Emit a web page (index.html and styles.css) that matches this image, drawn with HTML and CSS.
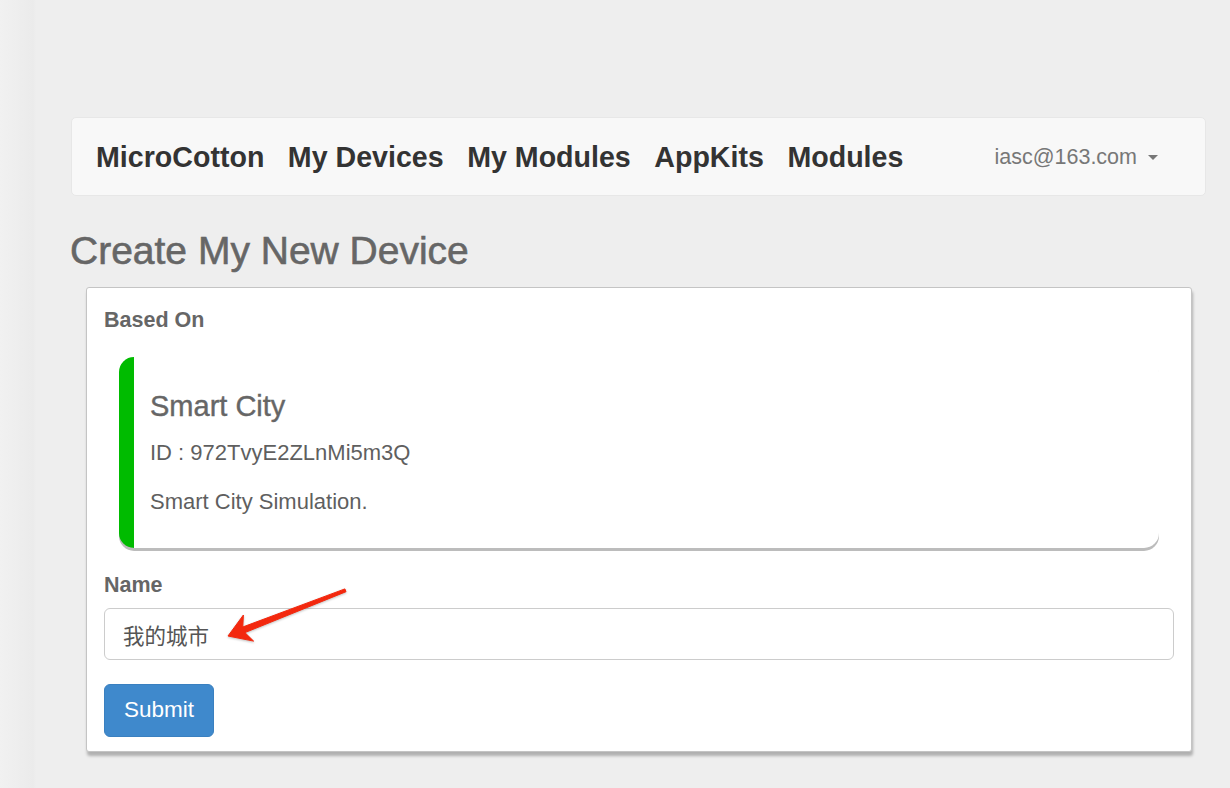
FILE: index.html
```html
<!DOCTYPE html>
<html lang="en">
<head>
<meta charset="utf-8">
<title>Create My New Device</title>
<link rel="stylesheet" href="styles.css">
</head>
<body>
<div class="page">
  <nav class="navbar">
    <ul class="nav-main">
      <li><a class="nav-link" href="#">MicroCotton</a></li>
      <li><a class="nav-link" href="#">My Devices</a></li>
      <li><a class="nav-link" href="#">My Modules</a></li>
      <li><a class="nav-link" href="#">AppKits</a></li>
      <li><a class="nav-link" href="#">Modules</a></li>
    </ul>
    <div class="user-menu">
      <span class="user-email">iasc@163.com</span>
      <span class="caret"></span>
    </div>
  </nav>

  <h1 class="page-title">Create My New Device</h1>

  <div class="panel">
    <form class="device-form">
      <label class="field-label">Based On</label>
      <div class="template-card">
        <h3 class="template-name">Smart City</h3>
        <p class="template-id">ID : 972TvyE2ZLnMi5m3Q</p>
        <p class="template-desc">Smart City Simulation.</p>
      </div>

      <label class="field-label name-label" for="name">Name</label>
      <div class="input-wrap">
        <input class="text-input" id="name" type="text" value="我的城市">
        <svg class="annot-arrow" width="130" height="64" viewBox="0 0 130 64">
          <polygon points="4,52 19.4,31 18.75,43 120.9,4.9 122,7.7 20.9,48.6 29.6,57.1" fill="#f3280e" stroke="#f3280e" stroke-width="1" stroke-linejoin="round"/>
        </svg>
      </div>

      <button class="btn-submit" type="button">Submit</button>
    </form>
  </div>
</div>
</body>
</html>
```
FILE: styles.css
```css
html, body {
  margin: 0;
  padding: 0;
}

body {
  background: linear-gradient(to right, #f1f1f1 0px, #ebebeb 33px, #eeeeee 36px);
  font-family: "Liberation Sans", Arial, "Noto Sans CJK SC", sans-serif;
  min-height: 788px;
}

.page {
  padding: 117px 24px 0 71px;
}

/* Navbar */
.navbar {
  box-sizing: border-box;
  height: 79px;
  background: #f8f8f8;
  border: 1px solid #e7e7e7;
  border-radius: 5px;
  display: flex;
  align-items: center;
  justify-content: space-between;
  padding: 0 47px 0 24px;
}

.nav-main {
  display: flex;
  gap: 23.5px;
  list-style: none;
  margin: 0;
  padding: 0;
}

.nav-link {
  font-size: 28.6px;
  font-weight: bold;
  color: #333;
  text-decoration: none;
  line-height: 34px;
}

.user-menu {
  display: flex;
  align-items: center;
  gap: 11px;
}

.user-email {
  font-size: 21.5px;
  color: #777;
  line-height: 30px;
}

.caret {
  width: 0;
  height: 0;
  border-left: 5px solid transparent;
  border-right: 5px solid transparent;
  border-top: 5px solid #777;
  margin-top: 2px;
}

/* Title */
.page-title {
  margin: 34px 0 15px -1px;
  font-size: 39px;
  line-height: 42px;
  font-weight: normal;
  color: #666;
  -webkit-text-stroke: 0.6px #666;
}

/* Panel */
.panel {
  margin: 0 14px 0 15px;
  background: #fff;
  border: 1px solid #c4c4c4;
  border-radius: 3px;
  box-shadow: 1px 4px 3px rgba(0, 0, 0, 0.26);
  padding: 17px 17px 14px;
}

.device-form {
  margin: 0;
}

.field-label {
  display: block;
  font-size: 21.5px;
  line-height: 30px;
  font-weight: bold;
  color: #666;
}

.name-label {
  margin-bottom: 8px;
}

/* Template card */
.template-card {
  margin: 22px 15px 22px;
  background: #fff;
  border-left: 15px solid #00bb00;
  border-radius: 15px;
  box-shadow: 0 3px 0 #bcbcbc;
  padding: 33px 15px 32px 16px;
  color: #666;
}

.template-name {
  margin: 0;
  font-size: 29px;
  line-height: 32px;
  font-weight: normal;
  color: #666;
  -webkit-text-stroke: 0.4px #666;
}

.template-id {
  margin: 17px 0 0;
  font-size: 22px;
  line-height: 28px;
  color: #5f5f5f;
}

.template-desc {
  margin: 21px 0 0;
  font-size: 22px;
  line-height: 28px;
  color: #5f5f5f;
}

/* Input */
.input-wrap {
  position: relative;
}

.text-input {
  display: block;
  box-sizing: border-box;
  width: 100%;
  height: 52px;
  margin: 0;
  border: 1px solid #cccccc;
  border-radius: 6px;
  padding: 0 18px;
  font-family: "Liberation Sans", "Noto Sans CJK SC", sans-serif;
  font-size: 21.5px;
  color: #555;
  background: #fff;
  outline: none;
}

.annot-arrow {
  position: absolute;
  left: 120px;
  top: -24px;
  filter: drop-shadow(0 1px 1px rgba(0, 0, 0, 0.25));
}

/* Button */
.btn-submit {
  display: block;
  box-sizing: border-box;
  margin-top: 24px;
  height: 53px;
  padding: 0 19px;
  background: #3f89cc;
  border: 1px solid #3a80c0;
  border-radius: 6px;
  color: #fff;
  font-family: "Liberation Sans", Arial, sans-serif;
  font-size: 22.5px;
  line-height: 1;
}
```
